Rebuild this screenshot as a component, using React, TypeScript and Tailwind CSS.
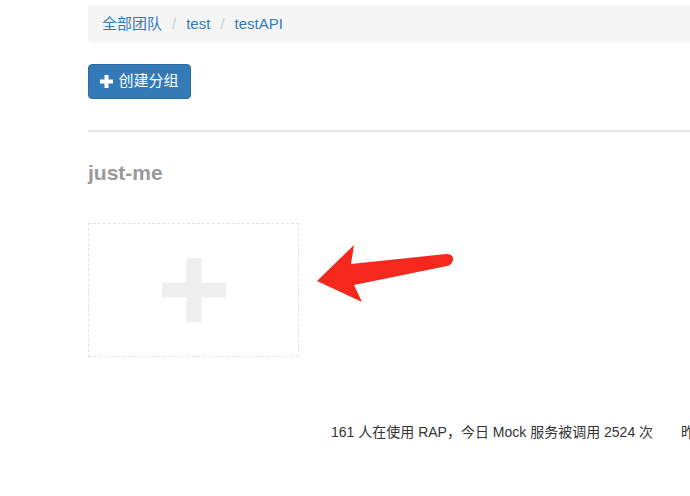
export default function App() {
  return (
    <div className="relative w-[690px] h-[496px] overflow-hidden bg-white font-['Liberation_Sans','Noto_Sans_CJK_SC',sans-serif]">
      <div className="pl-[88px] pt-[5px]">
        <div className="flex items-center h-[37px] bg-[#f5f5f5] rounded-l pl-[14px] pt-[1px] text-[15px] text-[#337ab7] w-[700px]">
          <span>全部团队</span>
          <span className="px-[10px] text-[#ccc]">/</span>
          <span>test</span>
          <span className="px-[10px] text-[#ccc]">/</span>
          <span>testAPI</span>
        </div>

        <button className="mt-[22px] flex items-center gap-[5px] h-[35px] w-[103px] justify-center rounded-[4px] bg-[#337ab7] text-white text-[15px] border border-[#2e6da4]">
          <svg width="13" height="13" viewBox="0 0 13 13">
            <path d="M4.5 0h4v4.5H13v4H8.5V13h-4V8.5H0v-4h4.5z" fill="white" />
          </svg>
          <span>创建分组</span>
        </button>

        <hr className="mt-[31px] border-0 border-t-2 border-[#e6e6e6] w-[620px]" />

        <h2 className="mt-[29px] text-[21px] leading-[24px] font-bold text-[#999]">just-me</h2>

        <div className="mt-[38px] w-[211px] h-[134px] border border-dashed border-[#e2e2e2] flex items-center justify-center">
          <svg width="64" height="64" viewBox="0 0 64 64">
            <path d="M24.5 0h15v24.5H64v15H39.5V64h-15V39.5H0v-15h24.5z" fill="#eeeeee" />
          </svg>
        </div>
      </div>

      <div className="mt-[65px] pl-[331px] text-[14px] text-[#333] whitespace-nowrap">
        161 人在使用 RAP，今日 Mock 服务被调用 2524 次
        <span className="ml-[28px]">昨日</span>
      </div>

      <svg className="absolute left-0 top-0" width="690" height="496" viewBox="0 0 690 496">
        <path
          d="M317 281 L354 245 L351 264 L446 254 Q454 254 453 260 Q452 265 447 266 L354 285 L362 302 Z"
          fill="#f4281c"
        />
      </svg>
    </div>
  );
}
